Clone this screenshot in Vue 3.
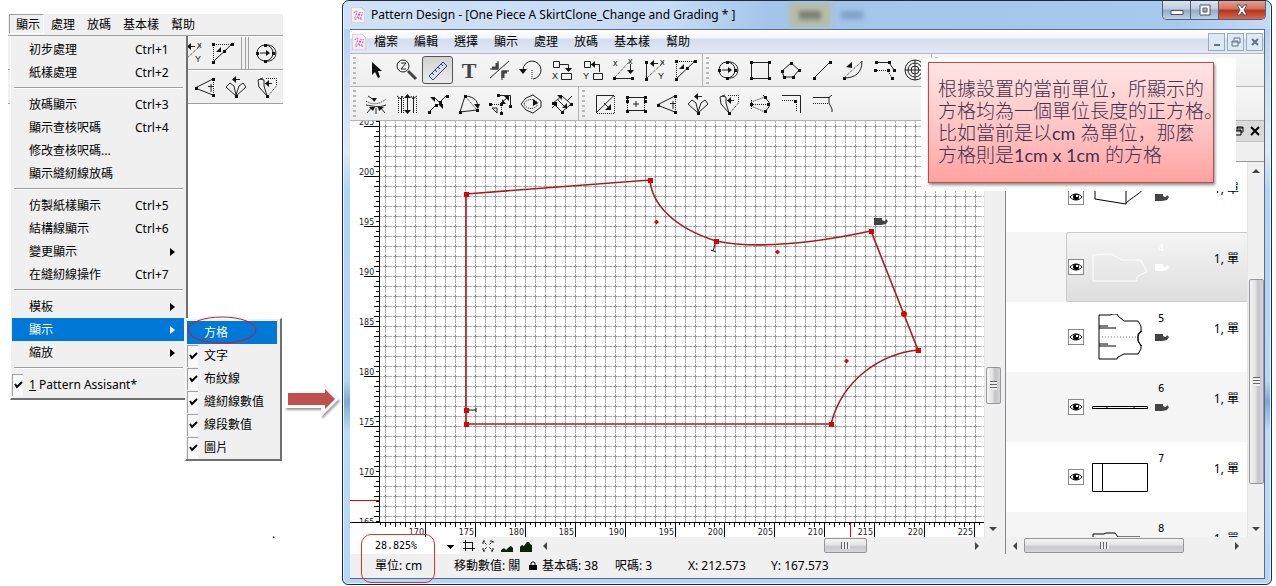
<script setup>
import { ref, h } from 'vue'

// s: solid strokes, w: wide strokes, d: dotted strokes, f: filled shapes, n: square nodes, t: letters, b: blue strokes
const icons = {
  pointer: { f: 'M8 4V17L11 14L14 20L16 19L14 13H18Z' },
  zoom: { s: 'M8 2a6 6 0 1 1 0 12a6 6 0 1 1 0-12M6 5h5l-5 6h5', w: 'M13 13L21 21' },
  ruler: { b: 'M3 18L17 4L21 8L7 22ZM6 15L8 17M9 12L11 14M12 9L14 11M15 6L17 8' },
  text: { big: 'T' },
  trim: { s: 'M2 11H10V3M21 13H14V22M2 20L21 3', w: 'M4 10H9V5M15 20V14H19' },
  rotate: { s: 'M4 12A9 9 0 1 1 14 21', d: 'M13 12V21', f: 'M0 11H8L4 16Z' },
  moveX: { s: 'M3.5 3.5H9.5V9.5H3.5ZM10 6.5H18.5V11M11.5 15.5H21.5V21.5H11.5Z', f: 'M15 10H22L18.5 14Z', t: [['X', 2, 21]] },
  moveY: { s: 'M3.5 3.5H9.5V9.5H3.5ZM10 6.5H18.5V14M12.5 15.5H21.5V21.5H12.5Z', f: 'M10 6.5L14 3V10Z', t: [['Y', 2, 21]] },
  gradeX: { s: 'M2 20.5H20M18.5 6V14', d: 'M3 19L18 3', f: 'M15 12H22L18.5 16Z', n: [[2, 20], [20, 20]], t: [['x', 1, 8], ['x', 16, 6]] },
  gradeY: { s: 'M3.5 4V21M8 5.5H15', d: 'M4 20L21 4', f: 'M7 5.5L11 2V9Z', n: [[3, 4], [3, 21]], t: [['x', 17, 7], ['Y', 15, 21]] },
  gradeXY: { s: 'M2 21L21 3', d: 'M2.5 21V3.5H21', f: 'M10 11V6L5 11Z', n: [[2, 3], [21, 3], [2, 21], [13, 10]] },
  ellipse: { s: 'M10 4a8 8 0 1 1 0 16a8 8 0 1 1 0-16M10 4C24 2 25 22 10 20M5 12H12', f: 'M11 9L15 12L11 15Z', n: [[10, 4], [10, 20], [2, 12], [18, 12]] },
  square: { s: 'M3.5 4.5H20.5V20.5H3.5Z', n: [[3, 4], [21, 4], [3, 20], [21, 20]] },
  polygon: { s: 'M12 5L20 12L14 19H5L3 13Z', n: [[12, 5], [20, 12], [14, 19], [5, 19], [3, 13]] },
  line: { s: 'M4 20L20 4', n: [[4, 20], [20, 4]] },
  curve: { s: 'M3 20C14 20 21 15 21 3', d: 'M3 20L21 3', f: 'M5 9L11 4V10Z', n: [[3, 20]] },
  parallel: { s: 'M4 4.5H17L22 12', d: 'M3 12.5H16L20 20', n: [[4, 4], [17, 4], [22, 12], [3, 12], [16, 12], [20, 20]] },
  target: { s: 'M12 2a10 10 0 1 1 0 20a10 10 0 1 1 0-20M12 5a7 7 0 1 1 0 14a7 7 0 1 1 0-14M12 8a4 4 0 1 1 0 8a4 4 0 1 1 0-8M2 12H22M12 2V22' },
  seam: { s: 'M2 13C9 14 14 16 22 13M3 21L8 15M12 22V16M21 21L16 15M4 4L10 8', d: 'M2 9C8 13 15 13 22 7', f: 'M8 6H13L10 10ZM5 15H11L9 19ZM14 15H20L15 19Z' },
  stretch: { s: 'M6.5 4V21M18.5 4V21M12.5 4V20M2 4L6 7L8 4M16 4L18 7L22 4', d: 'M3.5 6V21M21.5 6V21M8.5 6V21', f: 'M9 6L12.5 2L16 6ZM9 18H16L12.5 22Z' },
  split: { s: 'M3 20L10 13M14 10L21 3M8 5L14 11', f: 'M4 5H9V10ZM12 12H17V17Z', n: [[3, 20], [10, 13], [14, 10], [21, 4]] },
  pivot: { s: 'M8 4L3 20L20 18M9 4C17 5 20 8 21 14', d: 'M8 4L20 18', f: 'M17 12H23L21 17Z', n: [[8, 4], [3, 20], [20, 18]] },
  scale: { s: 'M10 3.5H22.5V14M4 16H9V21ZM13 11L19 6', d: 'M2 12.5H13.5V22', f: 'M21 4V9L16 4ZM14 12V7L18 12Z', n: [[2, 12], [13, 12], [13, 21], [22, 14], [10, 3]] },
  loop: { s: 'M2 12L7 6L14 3L22 9V15L14 21L7 18Z', d: 'M5 12C7 7 14 6 18 10V14C14 18 7 17 5 12', f: 'M14 7L19 11L14 14Z' },
  swap: { s: 'M3 11L12 20L21 12L12 4ZM7 7L17 17M2 16L7 11M17 9L22 4', f: 'M7 3H12V8ZM12 16H17V11ZM2 10H7V15Z', n: [[3, 11], [12, 20], [21, 12]] },
  box: { s: 'M3.5 21V3.5H21L3 21M11 11L17 17', d: 'M4 21.5H21.5V3', f: 'M18 12V18H12Z' },
  width: { s: 'M3 5.5H21M3 18.5H21M9 12H15M12 9V15', d: 'M3.5 5V19M20.5 5V19', n: [[3, 5], [21, 5], [3, 19], [21, 19], [3, 9], [21, 9]] },
  dart: { s: 'M20 4L2 13L20 20M15 11.5H20M18 9V17', d: 'M20.5 5V20', n: [[20, 4], [3, 13], [20, 20]] },
  fan: { s: 'M12 21L2 12L6 8L10 11L12 20L15 11L19 8L22 12ZM9 4.5H16', f: 'M8 4.5L12 1V8Z', n: [[12, 21]] },
  pleat: { s: 'M12 21L4 12L3 5L8 3M12 21L9 11V5L5 4M10 8.5H17', d: 'M11 3.5H21.5V11L13 21', f: 'M10 8.5L14 5V12Z', n: [[12, 21]] },
  spread: { s: 'M15 3L21 10V15L16 21', d: 'M3 12.5H20M3 10L17 5M3 14L17 20M3.5 8V17', n: [[3, 12], [17, 5], [20, 12], [17, 19]] },
  corner: { s: 'M3 3.5H21.5V21', d: 'M3 8.5H17.5V20', n: [[16, 9]] },
  notch: { s: 'M3 5.5H19L22 3M19 5L19 11L22 17V20', d: 'M3 11.5H18' },
}

const ToolIcon = ({ name }) => {
  const ic = icons[name]
  const parts = []
  if (ic.s) parts.push(h('path', { class: 'ti-solid', d: ic.s }))
  if (ic.w) parts.push(h('path', { class: 'ti-wide', d: ic.w }))
  if (ic.b) parts.push(h('path', { class: 'ti-blue', d: ic.b }))
  if (ic.d) parts.push(h('path', { class: 'ti-dots', d: ic.d }))
  if (ic.f) parts.push(h('path', { class: 'ti-fill', d: ic.f }))
  for (const [x, y] of ic.n || []) parts.push(h('rect', { class: 'ti-fill', x: x - 1, y: y - 1, width: 3, height: 3 }))
  for (const [c, x, y] of ic.t || []) parts.push(h('text', { class: 'ti-letter', x, y }, c))
  if (ic.big) parts.push(h('text', { class: 'ti-big', x: 12, y: 20, 'text-anchor': 'middle' }, ic.big))
  return h('svg', { class: 'ti', viewBox: '0 0 24 24' }, parts)
}
ToolIcon.props = ['name']

const toolRow1 = ['pointer', 'zoom', 'ruler', 'text', 'trim', 'rotate', 'moveX', 'moveY', 'gradeX', 'gradeY', 'gradeXY']
const toolRow1b = ['ellipse', 'square', 'polygon', 'line', 'curve', 'parallel', 'target']
const toolRow2 = ['seam', 'stretch', 'split', 'pivot', 'scale', 'loop', 'swap']
const toolRow2b = ['box', 'width', 'dart', 'fan', 'pleat', 'spread', 'corner', 'notch']

const groups = [
  [{ t: '初步處理', k: 'Ctrl+1' }, { t: '紙樣處理', k: 'Ctrl+2' }],
  [{ t: '放碼顯示', k: 'Ctrl+3' }, { t: '顯示查核呎碼', k: 'Ctrl+4' }, { t: '修改查核呎碼...' }, { t: '顯示縫紉線放碼' }],
  [{ t: '仿製紙樣顯示', k: 'Ctrl+5' }, { t: '結構線顯示', k: 'Ctrl+6' }, { t: '變更顯示', sub: true }, { t: '在縫紉線操作', k: 'Ctrl+7' }],
  [{ t: '模板', sub: true }, { t: '顯示', sub: true, on: true }, { t: '縮放', sub: true }],
]
const subItems = ['文字', '布紋線', '縫紉線數值', '線段數值', '圖片']
const backMenus = ['顯示', '處理', '放碼', '基本樣', '幫助']
const menus = ['檔案', '編輯', '選擇', '顯示', '處理', '放碼', '基本樣', '幫助']

const tickLength = (value) => (value % 5 === 0 ? 15 : value % 1 === 0 ? 5 : 3)
const yTicks = Array.from({ length: 84 }, (_, i) => {
  const value = 205.5 - i / 2
  return { value, y: 55 + (200 - value) * 10, len: tickLength(value) }
})
const xTicks = Array.from({ length: 122 }, (_, i) => {
  const value = 165.5 + i / 2
  return { value, x: Math.round(76 + (value - 170) * 9.98), len: tickLength(value) }
}).filter((t) => t.x > 30 && t.x < 634)

const corners = [[116, 73], [300, 59], [366, 120], [521, 110], [568, 229], [481, 303], [116, 303], [116, 289]]
const handles = [[306, 101], [427, 131], [496, 240]]

const pieces = [
  { id: 3, pin: true, d: 'M3 0V25L34 30V0M34 29C44 20 54 18 54 6L52 0' },
  { id: 4, pin: true, d: 'M1 2L12 1L20 1L23 3L27 5L30 7H49L51 12L55 19L50 21L45 24V28H1Z', on: true },
  { id: 5, pin: true, d: 'M7 1H18L21 0H25L26 2L32 7H46L49 12V17L46 20V27L49 32V35L46 40H32L26 43L25 45H7ZM7 14H24M7 12H16M7 32H24M7 30H16M50 17C44 21 45 28 50 32', dot: 'M10 23H44' },
  { id: 6, pin: true, d: 'M0.5 22.5H55.5V24.5H0.5ZM15 22V24M42 22V24' },
  { id: 7, d: 'M0.5 9.5H55.5V37.5H0.5ZM10.5 9V37' },
  { id: 8, pin: true, d: 'M1 12V10H12L14 9H23L26 13H48L52 25H1Z' },
]
const scale = ref('28.825%')
const assistant = ref(true)
</script>

<template>
  <div class="page">
    <svg class="defs" aria-hidden="true">
      <symbol id="i-pin" viewBox="0 0 14 8">
        <path class="pinshape" d="M0 0H8L8 2L10 3H11L12 1L14 3L12 6L7 7H0Z" />
      </symbol>
      <symbol id="i-logo" viewBox="0 0 14 16">
        <path d="M0 0H10L14 4V16H0Z" fill="#f4eef5" stroke="#c5b8c8" />
        <path d="M3 6C5 2 7 4 5 8S3 13 5 12S8 5 9 5S6 12 8 12S12 6 11 5M9 12L12 12" fill="none" stroke="#c659ae" stroke-dasharray="2 1" />
      </symbol>
    </svg>

    <section class="demo">
      <div class="back">
        <nav class="backbar">
          <button v-for="(m, i) in backMenus" :key="m" :class="{ open: i === 0 }">{{ m }}</button>
        </nav>
        <div class="backtools">
          <ToolIcon name="gradeY" />
          <ToolIcon name="gradeXY" />
          <i class="ridge"></i>
          <ToolIcon name="ellipse" />
        </div>
        <div class="backtools">
          <ToolIcon name="dart" />
          <ToolIcon name="fan" />
          <ToolIcon name="pleat" />
        </div>

        <div class="menu">
          <template v-for="(g, gi) in groups" :key="gi">
            <button v-for="it in g" :key="it.t" class="item" :class="{ on: it.on }">
              <span>{{ it.t }}</span>
              <kbd v-if="it.k">{{ it.k }}</kbd>
              <svg v-if="it.sub" class="sub" viewBox="0 0 5 8"><path d="M0 0L5 4L0 8Z" fill="currentColor" /></svg>
            </button>
            <hr />
          </template>
          <label class="item tick">
            <input v-model="assistant" type="checkbox" />
            <span class="box"><svg viewBox="0 0 9 8"><path d="M1 3L3 6L8 1" /></svg></span>
            <span><u>1</u> Pattern Assisant*</span>
          </label>

          <div class="submenu">
            <button class="item on">
              <span>方格</span>
              <svg class="ring" viewBox="0 0 72 28"><ellipse cx="36" cy="14" rx="34" ry="13" /></svg>
            </button>
            <label v-for="s in subItems" :key="s" class="item tick">
              <input type="checkbox" checked />
              <span class="box"><svg viewBox="0 0 9 8"><path d="M1 3L3 6L8 1" /></svg></span>
              <span>{{ s }}</span>
            </label>
          </div>
        </div>
      </div>
      <svg class="arrow" viewBox="0 0 60 42">
        <path d="M3 11H39V2L57 19L39 37V28H3Z" fill="#fff" />
        <path d="M6 13H43V9L53 19L43 29V25H6Z" fill="#c0504d" />
      </svg>
      <p class="stop">.</p>
    </section>

    <main class="win">
      <header class="title">
        <svg class="logo"><use href="#i-logo" /></svg>
        <h1>Pattern Design - [One Piece A SkirtClone_Change and Grading * ]</h1>
        <div class="ghost" aria-hidden="true"><b></b><i></i></div>
        <div class="sys">
          <button aria-label="Minimize"><svg viewBox="0 0 14 12"><path d="M1 6.5H13V10.5H1Z" /></svg></button>
          <button aria-label="Maximize"><svg viewBox="0 0 14 12"><path fill-rule="evenodd" d="M2 1H12V11H2ZM5 4V8H9V4Z" /></svg></button>
          <button class="close" aria-label="Close"><svg viewBox="0 0 14 12"><path d="M2 1H5L7 4L9 1H12L9 6L12 11H9L7 8L5 11H2L5 6Z" /></svg></button>
        </div>
      </header>

      <div class="client">
        <nav class="bar">
          <svg class="logo"><use href="#i-logo" /></svg>
          <button v-for="m in menus" :key="m">{{ m }}</button>
          <span class="mdi">
            <button aria-label="Minimize document"><svg viewBox="0 0 12 12"><path d="M3 9H9" stroke-width="2" /></svg></button>
            <button aria-label="Restore document"><svg viewBox="0 0 12 12"><path d="M4 4V2H10V7H8M2 5H8V10H2ZM2 6H8" /></svg></button>
            <button aria-label="Close document"><svg viewBox="0 0 12 12"><path d="M3 3L9 9M9 3L3 9" stroke-width="2" /></svg></button>
          </span>
        </nav>

        <div class="tools">
          <i class="grip"></i>
          <button v-for="n in toolRow1" :key="n" :class="{ active: n === 'ruler' }" :aria-label="n"><ToolIcon :name="n" /></button>
          <i class="split"></i><i class="grip"></i>
          <button v-for="n in toolRow1b" :key="n" :aria-label="n"><ToolIcon :name="n" /></button>
          <i class="split"></i><i class="grip"></i>
        </div>
        <div class="tools">
          <i class="grip"></i>
          <button v-for="n in toolRow2" :key="n" :aria-label="n"><ToolIcon :name="n" /></button>
          <i class="split"></i><i class="grip"></i>
          <button v-for="n in toolRow2b" :key="n" :aria-label="n"><ToolIcon :name="n" /></button>
        </div>

        <div class="work">
          <div class="editor">
            <div class="viewport">
              <div class="sheet">
                <svg class="canvas">
                  <defs>
                    <pattern id="grid" x="30" y="0" width="10" height="10" patternUnits="userSpaceOnUse">
                      <path d="M0 5.5H2M3 5.5H10M5.5 0V2M5.5 3V10" stroke="#b4b4b4" />
                      <path d="M4 5.5H7M5.5 4V7" stroke="#999" />
                    </pattern>
                  </defs>
                  <rect x="30" y="0" width="100%" height="100%" fill="url(#grid)" />
                  <path class="shape" d="M116 73L300 59C302 84 325 107 366 120C400 127 450 125 521 110L568 229C530 233 492 259 481 303H116Z" />
                  <path class="mark" d="M116 289H126M126 287V291M366 120L363 130M361 129L366 131" />
                  <rect v-for="(p, i) in corners" :key="i" class="red" :x="p[0] - 2" :y="p[1] - 2" width="5" height="5" />
                  <circle class="red" cx="554" cy="193" r="3" />
                  <path v-for="(p, i) in handles" :key="'h' + i" class="red" :d="`M${p[0] - 2} ${p[1]}l2.5 -2.5l2.5 2.5l-2.5 2.5z`" />
                  <use href="#i-pin" x="524" y="97" width="14" height="8" />
                  <rect x="0" y="0" width="29" height="100%" fill="#fff" />
                  <g class="axis">
                    <rect x="29" y="0" width="1" height="100%" />
                    <rect v-for="t in yTicks" :key="t.value" :x="29 - t.len" :y="t.y" :width="t.len" height="1" />
                    <template v-for="t in yTicks" :key="'l' + t.value">
                      <text v-if="t.len === 15" x="9" :y="t.y - 1">{{ t.value }}</text>
                    </template>
                  </g>
                  <rect x="0" y="379" width="29" height="1" fill="#e00" />
                </svg>
                <svg class="xaxis">
                  <g class="axis">
                    <rect x="0" y="0" width="100%" height="1" />
                    <rect v-for="t in xTicks" :key="t.value" :x="t.x - 1" y="0" width="1" :height="t.len" />
                    <template v-for="t in xTicks" :key="'l' + t.value">
                      <text v-if="t.len === 15" :x="t.x - 2" y="13" text-anchor="end">{{ t.value }}</text>
                    </template>
                  </g>
                  <rect x="500" y="1" width="1" height="14" fill="#f00" />
                </svg>
              </div>
              <div class="vscroll one"><i class="thumb"></i><i class="dn"></i></div>
            </div>
            <div class="zoombar">
              <select v-model="scale" aria-label="Zoom"><option>28.825%</option></select>
              <button aria-label="Fit piece"><svg viewBox="0 0 12 12"><path d="M2.5 0V11M0 2.5H10M2 8.5H12M9.5 2V11M0 8.5H2" /></svg></button>
              <button aria-label="Fit all"><svg viewBox="0 0 12 12"><path d="M1 4V1H4M1 1L5 5M8 1H11V4M11 1L7 5M1 8V11H4M1 11L5 7M11 8V11H8M11 11L7 7" stroke-dasharray="2 1" /></svg></button>
              <button aria-label="Small hills"><svg viewBox="0 0 12 12"><path class="hill" d="M0 12V10L3 8L5 10L8 7L10 6L12 8V12Z" /></svg></button>
              <button aria-label="Large hills"><svg viewBox="0 0 12 12"><path class="hill" d="M0 12V7L2 5L4 6L7 2H9L10 4L12 5V12Z" /></svg></button>
              <div class="hscroll"><i class="lt"></i><i class="thumb"></i><i class="rt"></i></div>
            </div>
          </div>

          <aside class="dock">
            <div class="dockhead">
              <button aria-label="Float panel"><svg viewBox="0 0 12 12"><path d="M4 4V2H10V7H8M2 5H8V10H2ZM2 6H8M4 3H10" /></svg></button>
              <button aria-label="Close panel"><svg viewBox="0 0 12 12"><path d="M2 2L10 10M10 2L2 10" stroke-width="2" /></svg></button>
            </div>
            <div class="dockcols"></div>
            <div class="dockbody">
              <ul class="list">
                <li v-for="p in pieces" :key="p.id" :class="{ on: p.on }">
                  <div class="row">
                    <button class="eye" :aria-label="'Show piece ' + p.id">
                      <svg viewBox="0 0 14 10"><path d="M1 5C4 1 10 1 13 5C10 9 4 9 1 5Z" /><circle cx="7" cy="5" r="3" /><rect x="7" y="3" width="2" height="2" /></svg>
                    </button>
                    <svg class="thumbnail" viewBox="0 0 57 46"><path :d="p.d" /><path v-if="p.dot" class="dot" :d="p.dot" /></svg>
                    <div class="info"><span>{{ p.id }}</span><svg v-if="p.pin"><use href="#i-pin" /></svg></div>
                    <span class="qty">1, 單</span>
                  </div>
                </li>
              </ul>
              <div class="vscroll two"><i class="up"></i><i class="thumb"></i><i class="dn"></i></div>
            </div>
            <div class="hscroll wide2"><i class="lt"></i><i class="thumb"></i><i class="rt"></i></div>
          </aside>
        </div>

        <footer class="status">
          <span class="unit">單位: cm</span>
          <span class="move">移動數值: 關</span>
          <span class="base"><svg viewBox="0 0 8 9"><path d="M0 4H8V9H0Z" /><path class="bow" d="M2 4V2L3 1H5L6 2V4" /></svg>基本碼: 38</span>
          <span class="size">呎碼: 3</span>
          <span class="cx">X: 212.573</span>
          <span>Y: 167.573</span>
        </footer>
      </div>
      <div class="circled"></div>
    </main>

    <div class="note">
      <p>根據設置的當前單位，所顯示的<br />方格均為一個單位長度的正方格。<br />比如當前是以<span>cm</span> 為單位，那麼<br />方格則是<span>1cm x 1cm</span> 的方格</p>
    </div>
  </div>
</template>

<style>
body {
  background: #fff;
}
.ti {
  display: block;
  flex: none;
  width: 24px;
  height: 24px;
}
.ti-solid, .ti-wide, .ti-dots, .ti-blue {
  fill: none;
  stroke: #222;
}
.ti-wide {
  stroke: #444;
  stroke-width: 3;
}
.ti-dots {
  stroke-dasharray: 1 1;
}
.ti-blue {
  stroke: #24409a;
}
.ti-fill {
  fill: #111;
}
.ti-letter {
  font: 9px 'Liberation Sans', sans-serif;
  fill: #111;
}
.ti-big {
  font: bold 22px 'Liberation Serif', serif;
  fill: #444;
}
</style>

<style scoped>
* {
  box-sizing: border-box;
}
.page {
  position: relative;
  display: flex;
  min-height: 100vh;
  overflow: hidden;
  padding: 0 4px 2px 0;
  font: 12px/16px 'Noto Sans', 'Noto Sans CJK TC', sans-serif;
  color: #000;
}
button {
  margin: 0;
  padding: 0;
  border: 0;
  background: none;
  font: inherit;
  color: inherit;
  white-space: nowrap;
}
.defs {
  position: absolute;
  width: 0;
  height: 0;
}
.pinshape {
  fill: currentColor;
}

/* menu demo */
.demo {
  flex: 0 0 341px;
  display: grid;
  grid-template-columns: 282px 1fr;
  grid-template-rows: 380px 1fr;
}
.back {
  position: relative;
  margin: 14px -1px 0 8px;
}
.backbar {
  display: flex;
  gap: 12px;
  height: 22px;
  padding-left: 1px;
  background: #f0f0f0;
  border-bottom: 1px solid #a0a0a0;
}
.backbar button {
  height: 21px;
}
.backbar .open {
  width: 35px;
  height: 20px;
  margin-right: -5px;
  border: 1px solid;
  border-color: #a0a0a0 #fff #fff #a0a0a0;
  padding: 1px 0 0 3px;
}
.backtools {
  display: flex;
  justify-content: flex-end;
  align-items: center;
  gap: 7px;
  height: 34px;
  padding: 0 4px 0 0;
  background: #f0f0f0;
  border-bottom: 1px solid #a0a0a0;
  border-top: 1px solid #fff;
}
.ridge {
  width: 9px;
  height: 33px;
  margin: 0 -2px 0 -1px;
  border-left: 1px solid #a0a0a0;
  background: linear-gradient(90deg, transparent 3px, #a0a0a0 3px, #a0a0a0 4px, transparent 4px, transparent 6px, #a0a0a0 6px, #a0a0a0 7px, transparent 7px);
}
.menu {
  position: absolute;
  left: 2px;
  top: 22px;
  width: 178px;
  padding: 2px 2px 2px 1px;
  background: #f0f0f0;
  border-left: 1px solid #fff;
  border-right: 2px solid #707070;
  border-bottom: 2px solid #707070;
}
.item {
  position: relative;
  display: flex;
  align-items: center;
  width: 100%;
  height: 23px;
  padding: 0 12px 0 17px;
  white-space: nowrap;
}
.menu > .item {
  width: 172px;
}
.menu > .item span {
  flex: 1;
  text-align: left;
}
.item kbd {
  font: inherit;
  width: 37px;
  text-align: left;
}
.item.on {
  background: #0078d7;
  color: #fff;
}
.sub {
  width: 5px;
  height: 8px;
  margin-right: -3px;
}
.menu hr {
  height: 1px;
  margin: 3px 1px 5px 2px;
  border: 0;
  background: #a0a0a0;
  box-shadow: 0 1px #fff;
}
.item.tick {
  padding-left: 0;
}
.tick input {
  position: absolute;
  opacity: 0;
  margin: 0;
  width: 11px;
  height: 22px;
}
.tick .box,
.menu > .tick .box {
  flex: 0 0 11px;
  height: 22px;
  margin-right: 6px;
  border-top: 1px solid #a0a0a0;
  border-left: 1px solid #a0a0a0;
  background: #f9f9f9;
  display: flex;
  align-items: center;
  justify-content: center;
}
.box svg {
  width: 9px;
  height: 8px;
}
.box path {
  fill: none;
  stroke: #000;
  stroke-width: 2;
}
.submenu {
  position: absolute;
  left: 174px;
  top: 282px;
  width: 97px;
  padding: 2px 2px 0 1px;
  background: #f0f0f0;
  border: 1px solid #fff;
  border-right: 2px solid #707070;
  border-bottom: 2px solid #707070;
}
.submenu .on {
  width: 90px;
}
.ring {
  position: absolute;
  left: -1px;
  top: -5px;
  width: 72px;
  height: 28px;
}
.ring ellipse {
  fill: none;
  stroke: #e01020;
}
.arrow {
  grid-column: 2;
  grid-row: 2;
  width: 60px;
  height: 42px;
  filter: drop-shadow(1px 2px 1px #999);
}
.stop {
  grid-column: 1;
  grid-row: 2;
  margin: 146px 0 0 272px;
}

/* application window */
.win {
  position: relative;
  flex: 1;
  min-width: 0;
  display: flex;
  flex-direction: column;
  padding: 0 6px 5px 7px;
  border: 1px solid #1c2c40;
  border-radius: 7px 7px 6px 6px;
  background: linear-gradient(180deg, #a9caee 0, #c4daf3 60px, #dfeaf6 150px, #aed4f8 190px, #b4d8fa 380px, #7da9d4 400px, #bcdcfa 430px, #b4d6fa 100%);
  box-shadow: inset 0 0 0 1px #e8f4ff;
}
.title {
  position: relative;
  display: flex;
  align-items: center;
  height: 28px;
  margin: 0 -5px 0 -6px;
  padding-left: 7px;
  background: linear-gradient(90deg, #cfe1f5 0, #c6dcf4 35%, #a3c5ea 46%, #a8c9ee 90%, #c4dbf5 100%);
  border-radius: 6px 6px 0 0;
}
.logo {
  width: 14px;
  height: 16px;
}
.title h1 {
  margin: 0 0 0 6px;
  font-size: 12px;
  line-height: 16px;
  font-weight: 400;
  white-space: nowrap;
}
.ghost {
  display: flex;
  gap: 10px;
  margin-left: 53px;
  filter: blur(2px);
}
.ghost b {
  width: 42px;
  height: 24px;
  background: linear-gradient(#76786e, #8a8c80) center / 22px 9px no-repeat, #b5bda7;
}
.ghost i {
  width: 22px;
  background: linear-gradient(#7c9cc4, #8aa9cf) center / 22px 9px no-repeat;
}
.sys {
  position: absolute;
  right: 4px;
  top: 0;
  display: flex;
  border: 1px solid #50617a;
  border-top: 0;
  border-radius: 0 0 5px 5px;
  overflow: hidden;
}
.sys button {
  width: 28px;
  height: 18px;
  display: flex;
  align-items: center;
  justify-content: center;
  border-right: 1px solid #50617a;
  background: linear-gradient(#dbe4ee 0, #bccbdc 45%, #94a9c3 50%, #bfd1e5 100%);
}
.sys .close {
  width: 46px;
  border-right: 0;
  background: linear-gradient(#e5a095 0, #d0705c 45%, #b5301a 50%, #d9684c 100%);
}
.sys svg {
  width: 14px;
  height: 12px;
}
.sys path {
  fill: #fff;
  stroke: #4a5264;
}
.client {
  flex: 1;
  display: flex;
  flex-direction: column;
  border: 1px solid #5b6b80;
  border-left: 0;
  background: #f0f0f0;
}
.bar {
  display: flex;
  align-items: center;
  gap: 16px;
  height: 24px;
  padding-left: 2px;
  background: linear-gradient(#fff 0, #f3f6fb 8px, #d5dcee 9px, #e2e8f5 100%);
  border-bottom: 1px solid #b4b8cc;
}
.bar .logo {
  margin-right: -8px;
}
.mdi {
  display: flex;
  gap: 2px;
  margin-left: auto;
  padding-right: 1px;
}
.mdi button {
  width: 17px;
  height: 18px;
  display: flex;
  align-items: center;
  justify-content: center;
  border: 1px solid #9aabbb;
  background: #dde9f5;
}
.mdi svg, .dockhead svg, .zoombar svg {
  width: 12px;
  height: 12px;
  fill: none;
  stroke: #64727f;
}
.tools {
  display: flex;
  align-items: center;
  height: 33px;
  padding-left: 2px;
  background: linear-gradient(#f6f6f6, #eee);
  border-bottom: 1px solid #b4b4b4;
}
.tools + .tools {
  height: 34px;
}
.grip {
  width: 3px;
  height: 27px;
  margin: 0 4px 0 1px;
  background: repeating-linear-gradient(#b8b8b8 0, #b8b8b8 2px, transparent 2px, transparent 5px);
}
.split {
  align-self: stretch;
  width: 1px;
  margin: 0 2px 0 1px;
  background: #b4b4b4;
}
.tools button {
  width: 31px;
  height: 28px;
  display: flex;
  align-items: center;
  justify-content: center;
}
.tools .active {
  border: 1px solid #555;
  border-radius: 3px;
  background: linear-gradient(#d2d2d2, #ececec);
}
.work {
  flex: 1;
  display: flex;
  min-height: 0;
}
.editor {
  flex: 1;
  min-width: 0;
  display: flex;
  flex-direction: column;
}
.viewport {
  flex: 1;
  display: flex;
  min-height: 0;
}
.sheet {
  flex: 1;
  min-width: 0;
  display: flex;
  flex-direction: column;
  background: #fff;
}
.canvas {
  flex: 1;
  width: 100%;
  min-height: 0;
  display: block;
}
.xaxis {
  width: 100%;
  height: 15px;
  display: block;
}
.axis text {
  font: 8px 'DejaVu Sans', sans-serif;
  fill: #222;
}
.shape {
  fill: none;
  stroke: #b01818;
  stroke-width: 1.6;
}
.mark {
  fill: none;
  stroke: #111;
}
.red {
  fill: #e00000;
}
.canvas use, .info svg {
  color: #444;
}
.vscroll, .hscroll {
  display: flex;
  align-items: center;
  background: #f0f0f0;
}
.vscroll {
  flex: 0 0 17px;
  flex-direction: column;
  border-left: 1px solid #e6e6e6;
}
.vscroll .thumb {
  width: 15px;
  border: 1px solid #979797;
  border-radius: 2px;
  background:
    repeating-linear-gradient(#666 0, #666 1px, #eee 1px, #eee 3px) center / 7px 9px no-repeat,
    linear-gradient(90deg, #f5f5f5, #e0e0e2 45%, #c4c4c8 60%, #d4d4d8);
}
.one .thumb {
  height: 37px;
  margin-top: 246px;
}
.two .thumb {
  height: 205px;
  margin-top: 106px;
}
.up, .dn, .lt, .rt {
  border: 4px solid transparent;
}
.dn {
  margin-top: auto;
  margin-bottom: 2px;
  border-top-color: #444;
}
.up {
  margin-top: 3px;
  border-bottom-color: #444;
}
.lt {
  border-right-color: #444;
}
.rt {
  margin-left: auto;
  border-left-color: #444;
}
.hscroll {
  flex: 1;
  height: 17px;
}
.hscroll .thumb {
  width: 43px;
  height: 15px;
  border: 1px solid #979797;
  border-radius: 2px;
  background:
    repeating-linear-gradient(90deg, #666 0, #666 1px, #eee 1px, #eee 3px) center / 9px 7px no-repeat,
    linear-gradient(#f5f5f5, #e4e4e6 45%, #c8c8cc 60%, #d8d8dc);
}
.zoombar {
  display: flex;
  align-items: center;
  height: 17px;
  padding-right: 18px;
}
.zoombar select {
  appearance: none;
  width: 110px;
  height: 17px;
  margin: 0 3px 0 0;
  padding: 0 0 0 25px;
  border: 0;
  font: 10px/17px 'DejaVu Sans Mono', monospace;
  color: #000;
  background:
    linear-gradient(to bottom left, #000 50%, transparent 50%) 97px 8px / 4px 4px no-repeat,
    linear-gradient(to bottom right, #000 50%, transparent 50%) 101px 8px / 4px 4px no-repeat,
    #fff;
}
.zoombar button {
  width: 12px;
  height: 12px;
  margin-right: 7px;
  display: flex;
}
.zoombar svg {
  stroke: #111;
}
.zoombar .hill {
  fill: #0d1f0d;
  stroke: none;
}
.zoombar .thumb {
  margin-left: 277px;
}

/* piece list */
.dock {
  flex: 0 0 263px;
  display: flex;
  flex-direction: column;
  padding-left: 4px;
}
.dockhead {
  height: 21px;
  display: flex;
  justify-content: flex-end;
  align-items: center;
  gap: 4px;
  padding-right: 3px;
  background: #dadada;
  border-bottom: 1px solid #c0c0c0;
}
.dockhead button {
  width: 12px;
  height: 12px;
  display: flex;
}
.dockhead svg {
  stroke: #000;
}
.dockcols {
  height: 20px;
  border-bottom: 1px solid #999;
}
.dockbody {
  flex: 1;
  min-height: 0;
  display: flex;
  border-left: 1px solid #828790;
  background: #fff;
}
.list {
  flex: 1;
  height: 375px;
  margin: 0;
  padding: 0;
  list-style: none;
  overflow: hidden;
}
.list li {
  height: 70px;
  padding-left: 60px;
}
.list li:nth-child(even) {
  background: #f5f5f5;
}
.row {
  display: flex;
  align-items: center;
  height: 70px;
  padding-left: 2px;
}
.on .row {
  border: 1px solid #c9c9c9;
  border-right: 0;
  border-radius: 3px 0 0 3px;
  padding-left: 1px;
  background: linear-gradient(#f5f5f5, #dedede);
}
.eye {
  width: 16px;
  height: 16px;
  border: 1px solid #888;
  background: #fff;
  display: flex;
  align-items: center;
}
.eye svg {
  width: 14px;
  height: 10px;
}
.eye path {
  fill: #fff;
  stroke: #000;
}
.eye rect {
  fill: #fff;
}
.thumbnail {
  width: 57px;
  height: 46px;
  margin: 0 6px 0 8px;
  fill: none;
  stroke: #000;
}
.thumbnail .dot {
  stroke: #777;
  stroke-dasharray: 1 2;
}
.on .thumbnail {
  stroke: #fff;
  margin-top: 18px;
}
.info {
  width: 14px;
  height: 50px;
  display: flex;
  flex-direction: column;
  gap: 8px;
  font: 10px/14px 'DejaVu Sans', sans-serif;
}
.info span {
  padding-left: 3px;
}
.info svg {
  width: 14px;
  height: 8px;
}
.on .info, .on .info svg {
  color: #fff;
}
.qty {
  margin: 0 8px 16px auto;
}
.hscroll.wide2 {
  flex: none;
  border-left: 1px solid #828790;
  padding: 0 21px 0 3px;
}
.wide2 .thumb {
  width: 160px;
  margin-left: 7px;
}

.status {
  display: flex;
  align-items: center;
  height: 24px;
  padding-left: 25px;
  white-space: nowrap;
}
.unit {
  width: 79px;
}
.move {
  width: 75px;
}
.base {
  width: 86px;
}
.base svg {
  width: 8px;
  height: 9px;
  margin-right: 5px;
}
.bow {
  fill: none;
  stroke: #000;
}
.size {
  width: 73px;
}
.cx {
  width: 83px;
}
.circled {
  position: absolute;
  left: 18px;
  bottom: 1px;
  width: 74px;
  height: 49px;
  border: 1px solid #e03030;
  border-radius: 10px;
}

/* callout over the window */
.note {
  position: absolute;
  right: 40px;
  top: 58px;
  width: 315px;
  padding: 4px 22px 8px 7px;
  background: #fff;
}
.note p {
  margin: 0;
  padding: 15px 0 16px 9px;
  border: 1px solid #be4b48;
  background: linear-gradient(#ffe5e5 0, #ffbebd 65%, #ffa2a1 100%);
  box-shadow: 1px 2px 3px #888;
  font: 300 19px/22px Lato, 'Noto Sans CJK SC', sans-serif;
  color: #3f3151;
  white-space: nowrap;
}
.note span {
  font-size: 18px;
  font-weight: 400;
}
</style>
